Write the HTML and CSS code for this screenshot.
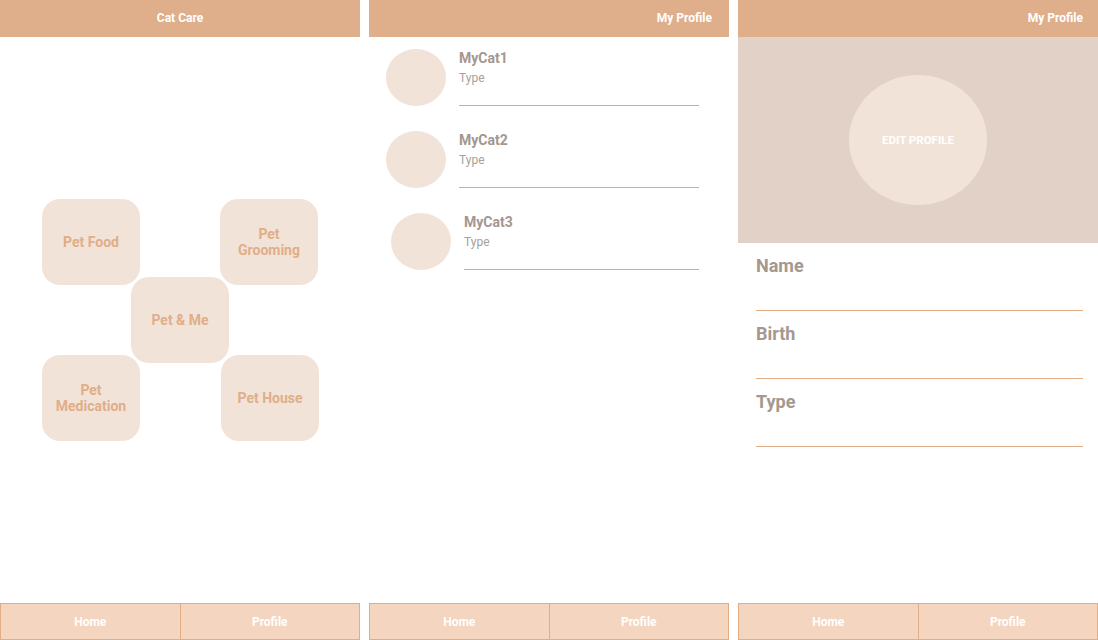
FILE: index.html
```html
<!DOCTYPE html>
<html lang="en">
<head>
<meta charset="utf-8">
<title>Cat Care</title>
<link rel="stylesheet" href="styles.css">
</head>
<body>
<div class="screens">
  <section class="screen">
    <header class="appbar appbar--center">Cat Care</header>
    <main class="home">
      <div class="tiles">
        <div class="tile tile--food">Pet Food</div>
        <div class="tile tile--grooming">Pet<br>Grooming</div>
        <div class="tile tile--me">Pet &amp; Me</div>
        <div class="tile tile--medication">Pet<br>Medication</div>
        <div class="tile tile--house">Pet House</div>
      </div>
    </main>
    <nav class="tabbar">
      <div class="tab">Home</div>
      <div class="tab">Profile</div>
    </nav>
  </section>

  <section class="screen">
    <header class="appbar appbar--right">My Profile</header>
    <main class="cats">
      <div class="cat">
        <div class="avatar"></div>
        <div class="cat-info">
          <div class="cat-name">MyCat1</div>
          <div class="cat-type">Type</div>
        </div>
      </div>
      <div class="cat">
        <div class="avatar"></div>
        <div class="cat-info">
          <div class="cat-name">MyCat2</div>
          <div class="cat-type">Type</div>
        </div>
      </div>
      <div class="cat cat--shifted">
        <div class="avatar"></div>
        <div class="cat-info">
          <div class="cat-name">MyCat3</div>
          <div class="cat-type">Type</div>
        </div>
      </div>
    </main>
    <nav class="tabbar">
      <div class="tab">Home</div>
      <div class="tab">Profile</div>
    </nav>
  </section>

  <section class="screen">
    <header class="appbar appbar--right appbar--tight">My Profile</header>
    <main class="profile">
      <div class="hero">
        <div class="edit-circle">EDIT PROFILE</div>
      </div>
      <div class="form">
        <div class="field">Name</div>
        <div class="field">Birth</div>
        <div class="field">Type</div>
      </div>
    </main>
    <nav class="tabbar">
      <div class="tab">Home</div>
      <div class="tab">Profile</div>
    </nav>
  </section>
</div>
</body>
</html>
```

FILE: styles.css
```css
* { box-sizing: border-box; }

html, body {
  margin: 0;
  padding: 0;
  background: #ffffff;
  font-family: Roboto, "Liberation Sans", Arial, sans-serif;
}

.screens {
  display: flex;
  gap: 9px;
  width: 1098px;
  height: 640px;
}

.screen {
  width: 360px;
  height: 640px;
  display: flex;
  flex-direction: column;
  background: #ffffff;
}

/* App bar */
.appbar {
  height: 37px;
  flex: 0 0 37px;
  background: #dfae8a;
  color: #ffffff;
  font-size: 12px;
  font-weight: 700;
  display: flex;
  align-items: center;
  padding: 0 17px 1px;
}
.appbar--center { justify-content: center; }
.appbar--right { justify-content: flex-end; }
.appbar--tight { padding-right: 15px; }

/* Tab bar */
.tabbar {
  height: 37px;
  flex: 0 0 37px;
  display: flex;
  background: #f3d5c0;
  border: 1px solid #e0ad86;
}
.tab {
  flex: 1 1 0;
  display: flex;
  align-items: center;
  justify-content: center;
  color: #ffffff;
  font-size: 12px;
  font-weight: 700;
}
.tab + .tab { border-left: 1px solid #e0ad86; }

/* Home screen */
.home {
  flex: 1 1 auto;
  display: flex;
  align-items: center;
  justify-content: center;
}
.tiles {
  display: grid;
  grid-template-columns: 89px 9px 80px 9px 89px;
  grid-template-rows: 78px 8px 70px 8px 78px;
}
.tile {
  background: #f2e3d9;
  border-radius: 18px;
  color: #e0ae88;
  font-size: 14px;
  font-weight: 700;
  line-height: 16px;
  text-align: center;
  display: flex;
  align-items: center;
  justify-content: center;
}
.tile--food { grid-column: 1 / 3; grid-row: 1 / 3; }
.tile--grooming { grid-column: 4 / 6; grid-row: 1 / 3; }
.tile--me { grid-column: 2 / 5; grid-row: 2 / 5; }
.tile--medication { grid-column: 1 / 3; grid-row: 4 / 6; }
.tile--house { grid-column: 4 / 6; grid-row: 4 / 6; margin-left: 1px; margin-right: -1px; }

/* Cats list */
.cats {
  flex: 1 1 auto;
  padding-top: 12px;
  display: flex;
  flex-direction: column;
  gap: 25px;
}
.cat {
  display: flex;
  align-items: flex-start;
  gap: 13px;
  padding-left: 17px;
}
.cat--shifted { padding-left: 22px; }
.avatar {
  width: 60px;
  height: 57px;
  flex: 0 0 60px;
  border-radius: 50%;
  background: #f2e3d9;
}
.cat-info {
  width: 240px;
  height: 57px;
  border-bottom: 1px solid #d9a886;
}
.cat--shifted .cat-info { width: 235px; }
.cat-name {
  font-size: 14px;
  font-weight: 700;
  line-height: 18px;
  color: #a4968f;
}
.cat-type {
  margin-top: 3px;
  font-size: 12px;
  line-height: 16px;
  color: #a7a09b;
}

/* Profile screen */
.profile {
  flex: 1 1 auto;
  display: flex;
  flex-direction: column;
}
.hero {
  height: 206px;
  background: #e2d1c7;
  display: flex;
  align-items: center;
  justify-content: center;
}
.edit-circle {
  width: 138px;
  height: 130px;
  border-radius: 50%;
  background: #f2e3d9;
  color: #ffffff;
  font-size: 11.5px;
  font-weight: 700;
  display: flex;
  align-items: center;
  justify-content: center;
}
.form {
  padding: 0 15px 0 18px;
}
.field {
  height: 68px;
  border-bottom: 1px solid #e0ad86;
  padding-top: 12px;
  font-size: 18px;
  font-weight: 700;
  line-height: 21px;
  color: #a4988f;
}
```
